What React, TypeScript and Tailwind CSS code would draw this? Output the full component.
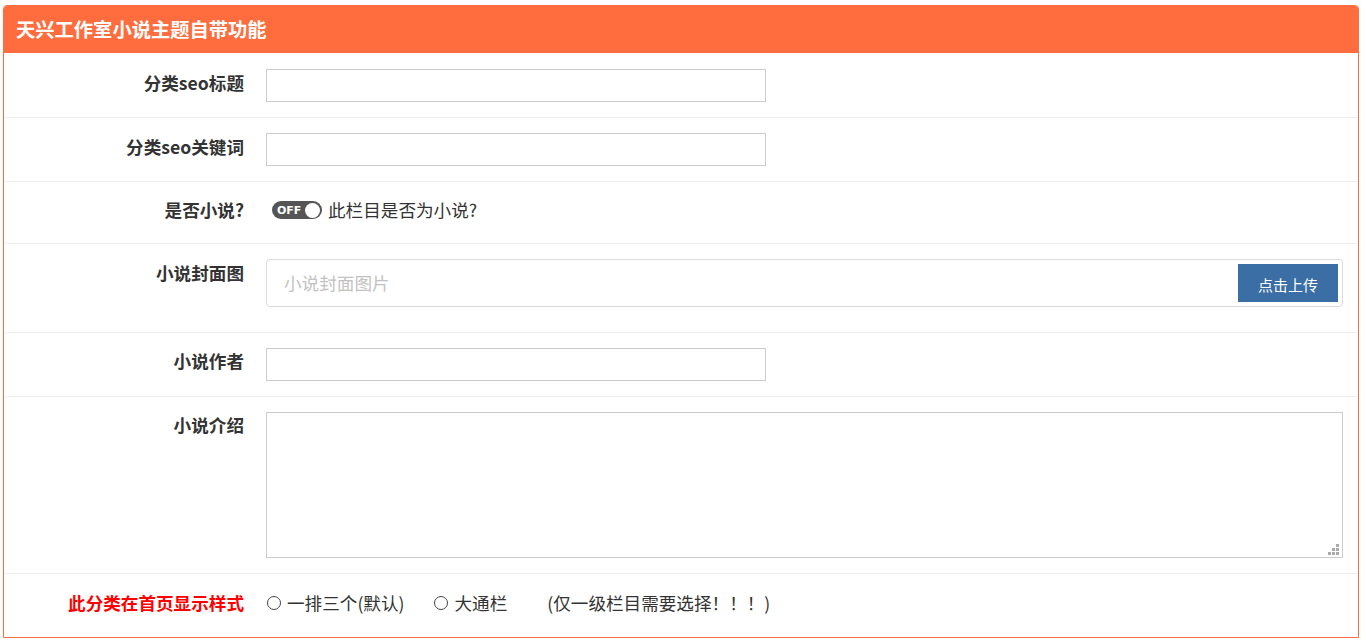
export default function App() {
    return (
        <div className="min-h-screen bg-white pt-[5px] pl-[3px] pr-[7px] font-['Noto_Sans_CJK_SC','Noto_Sans',sans-serif] text-[#333]">
            {/* the orange outlined panel */}
            <div className="border border-[#ff6d3f] rounded-t-[4px] overflow-hidden">
                <div className="h-[47px] bg-[#ff6d3f] px-[12px] flex items-center text-white font-bold text-[19.3px] leading-none">
                    天兴工作室小说主题自带功能
                </div>

                {/* 分类seo标题 */}
                <div className="flex border-b border-[#eee] pt-[16px] pb-[15px]">
                    <div className="w-[240px] shrink-0 text-right font-bold text-[17.6px] leading-[26px] pt-[1px]">分类seo标题</div>
                    <div className="ml-[22px]">
                        <input className="block w-[500px] h-[33px] border border-[#ccc] bg-white outline-none" />
                    </div>
                </div>

                {/* 分类seo关键词 */}
                <div className="flex border-b border-[#eee] pt-[15px] pb-[15px]">
                    <div className="w-[240px] shrink-0 text-right font-bold text-[17.6px] leading-[26px] pt-[1px]">分类seo关键词</div>
                    <div className="ml-[22px]">
                        <input className="block w-[500px] h-[33px] border border-[#ccc] bg-white outline-none" />
                    </div>
                </div>

                {/* 是否小说 */}
                <div className="flex border-b border-[#eee] pt-[15px] pb-[20px]">
                    <div className="w-[240px] shrink-0 text-right font-bold text-[17.6px] leading-[26px]">是否小说?</div>
                    <div className="ml-[28px] flex items-center">
                        <div className="w-[50px] h-[18px] rounded-full bg-[#555] flex items-center justify-between pl-[5px] pr-[2px]">
                            <span className="text-white font-semibold text-[11px] leading-none font-['DejaVu_Sans',sans-serif]">OFF</span>
                            <span className="w-[15px] h-[15px] rounded-full bg-white"></span>
                        </div>
                        <span className="ml-[6px] text-[17.6px] leading-[26px]">此栏目是否为小说?</span>
                    </div>
                </div>

                {/* 小说封面图 */}
                <div className="flex border-b border-[#eee] pt-[15px] pb-[25px]">
                    <div className="w-[240px] shrink-0 text-right font-bold text-[17.6px] leading-[26px] pt-[1px]">小说封面图</div>
                    <div className="ml-[22px] flex-1 mr-[15px]">
                        <div className="h-[48px] border border-[#ddd] rounded-[4px] flex items-center pl-[17px] pr-[4px]">
                            <span className="flex-1 text-[#c2c2c2] text-[17.6px] leading-[26px]">小说封面图片</span>
                            <div className="w-[100px] h-[38px] bg-[#3a6ea5] text-white text-[15px] flex items-center justify-center pt-[4px]">点击上传</div>
                        </div>
                    </div>
                </div>

                {/* 小说作者 */}
                <div className="flex border-b border-[#eee] pt-[15px] pb-[15px]">
                    <div className="w-[240px] shrink-0 text-right font-bold text-[17.6px] leading-[26px]">小说作者</div>
                    <div className="ml-[22px]">
                        <input className="block w-[500px] h-[33px] border border-[#ccc] bg-white outline-none" />
                    </div>
                </div>

                {/* 小说介绍 */}
                <div className="flex border-b border-[#eee] pt-[15px] pb-[15px]">
                    <div className="w-[240px] shrink-0 text-right font-bold text-[17.6px] leading-[26px]">小说介绍</div>
                    <div className="ml-[22px] flex-1 mr-[15px] relative">
                        <textarea className="block w-full h-[146px] border border-[#ccc] bg-white outline-none resize-none" />
                        {/* resize grip */}
                        <div className="absolute right-[4px] bottom-[3px] grid grid-cols-3 gap-[1px]">
                            <span className="w-[3px] h-[3px]"></span>
                            <span className="w-[3px] h-[3px]"></span>
                            <span className="w-[3px] h-[3px] bg-[#aaa]"></span>
                            <span className="w-[3px] h-[3px]"></span>
                            <span className="w-[3px] h-[3px] bg-[#aaa]"></span>
                            <span className="w-[3px] h-[3px] bg-[#aaa]"></span>
                            <span className="w-[3px] h-[3px] bg-[#aaa]"></span>
                            <span className="w-[3px] h-[3px] bg-[#aaa]"></span>
                            <span className="w-[3px] h-[3px] bg-[#aaa]"></span>
                        </div>
                    </div>
                </div>

                {/* 首页显示样式 */}
                <div className="flex pt-[16px] pb-[21px]">
                    <div className="w-[240px] shrink-0 text-right font-bold text-[17.6px] leading-[26px] text-[#ff0000]">此分类在首页显示样式</div>
                    <div className="ml-[22px] flex items-center text-[17.6px] leading-[26px]">
                        <span className="w-[14px] h-[14px] rounded-full border border-[#444] ml-[1px]"></span>
                        <span className="ml-[6px]">一排三个(默认)</span>
                        <span className="w-[14px] h-[14px] rounded-full border border-[#444] ml-[30px]"></span>
                        <span className="ml-[6px]">大通栏</span>
                        <span className="ml-[40px]">(仅一级栏目需要选择！！！)</span>
                    </div>
                </div>
            </div>
        </div>
    );
}
